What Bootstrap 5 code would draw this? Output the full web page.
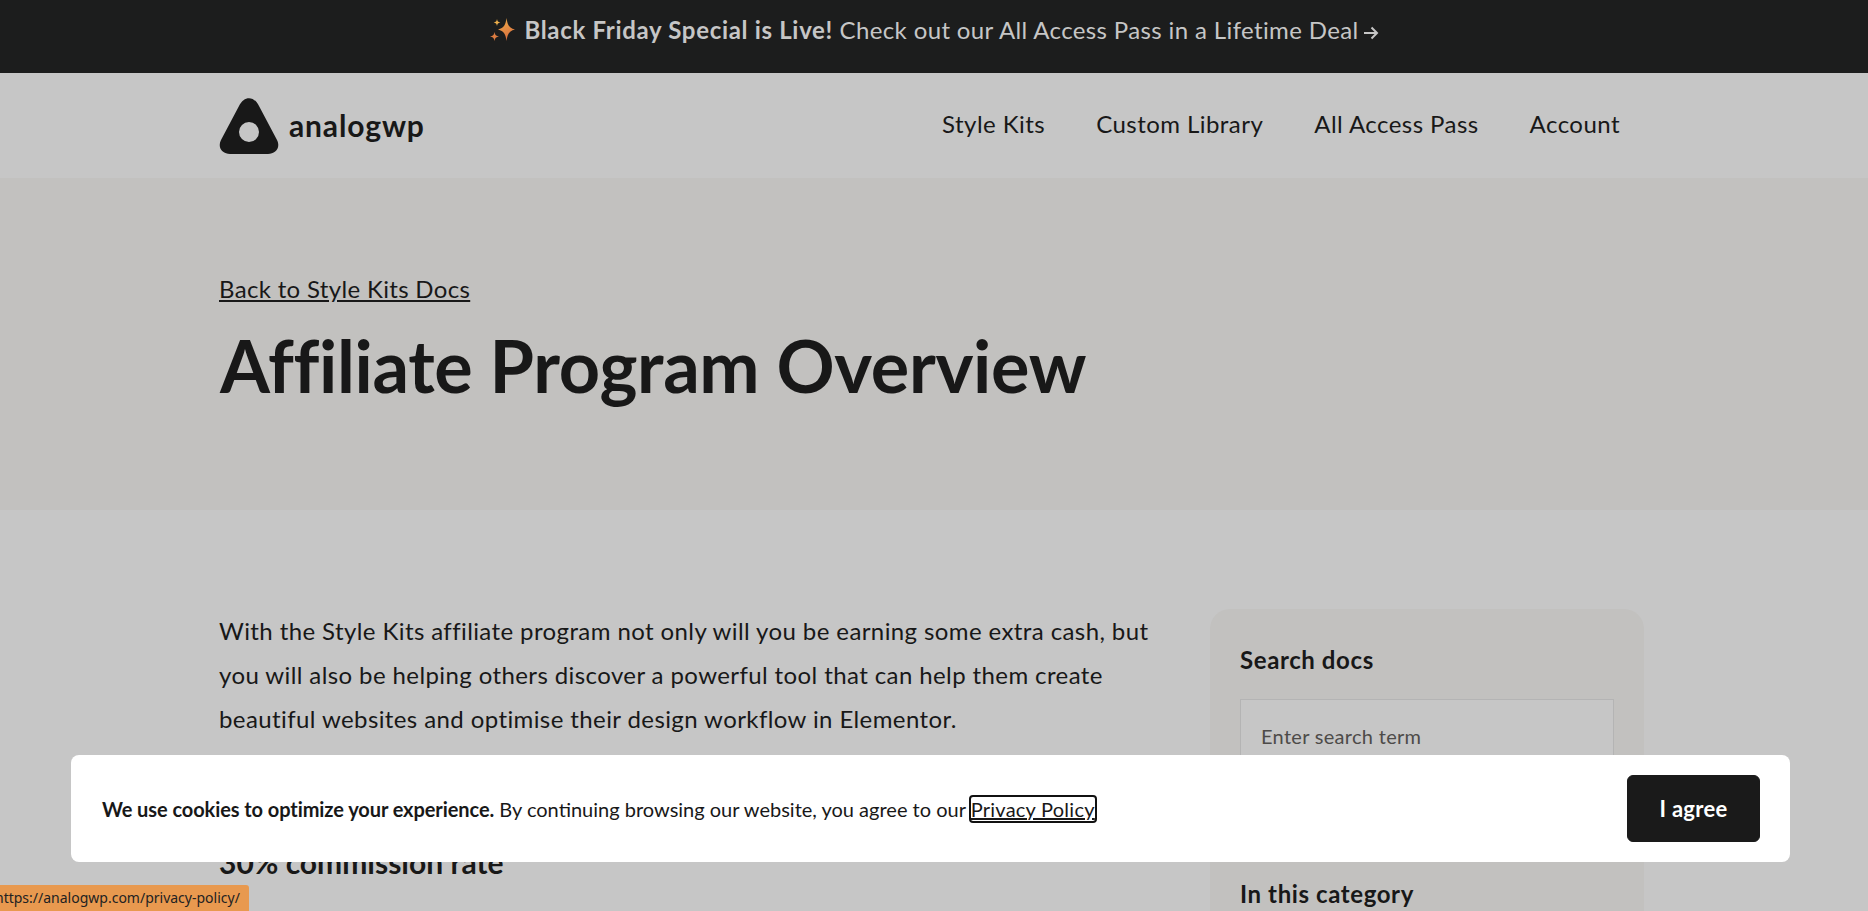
<!DOCTYPE html>
<html lang="en">
<head>
    <meta charset="UTF-8">
    <meta name="viewport" content="width=device-width, initial-scale=1.0">
    <title>Affiliate Program Overview</title>
    <link href="https://cdn.jsdelivr.net/npm/bootstrap@5.3.0/dist/css/bootstrap.min.css" rel="stylesheet">
    <style>
        html, body {
            height: 100%;
            overflow: hidden;
        }
        body {
            background-color: #c6c6c6;
            color: #181818;
            font-family: "Lato", "Liberation Sans", sans-serif;
        }
        .wrap {
            width: 1425px;
            margin-left: 219px;
        }
        .promo-bar {
            height: 73px;
            padding-bottom: 13px;
            background-color: #1c1d1d;
            color: #c6c6c6;
            font-size: 24px;
            gap: 7px;
        }
        .promo-bar a {
            color: #c6c6c6;
            text-decoration: none;
            letter-spacing: .37px;
        }
        .promo-bar strong {
            letter-spacing: .68px;
        }
        .promo-arrow {
            margin-left: 2px;
            vertical-align: -1px;
        }
        .site-nav {
            height: 105px;
        }
        .brand-name {
            font-size: 30px;
            font-weight: 700;
            color: #181818;
            text-decoration: none;
            gap: 10px;
            letter-spacing: .85px;
        }
        .menu {
            gap: 51px;
            padding-right: 24px;
            padding-bottom: 3px;
        }
        .menu a {
            font-size: 24px;
            color: #181818;
            text-decoration: none;
            letter-spacing: .45px;
        }
        .hero {
            height: 332px;
            background-color: #c2c1bf;
            padding-top: 93px;
        }
        .back-link {
            font-size: 24px;
            color: #181818;
            display: block;
            line-height: 36px;
            letter-spacing: .33px;
        }
        .hero h1 {
            font-size: 72px;
            font-weight: 700;
            line-height: 86px;
            margin-top: 15px;
            color: #181818;
            letter-spacing: -.34px;
            padding-left: 1px;
        }
        .body-area {
            padding-top: 99px;
            gap: 50px;
        }
        .main-col {
            width: 941px;
            flex: none;
        }
        .main-col p {
            font-size: 24px;
            line-height: 44px;
            margin-bottom: 103px;
            letter-spacing: .4px;
        }
        .main-col h2 {
            font-size: 30px;
            font-weight: 700;
        }
        .side-box {
            width: 434px;
            flex: none;
            background-color: #c2c1bf;
            border-radius: 20px;
            padding: 33px 30px;
        }
        .side-box h3 {
            font-size: 24px;
            font-weight: 700;
            line-height: 36px;
            margin-bottom: 21px;
            letter-spacing: .6px;
        }
        .search-field {
            background-color: #c6c6c6;
            border: 1px solid #b4b4b4;
            border-radius: 0;
            height: 74px;
            font-size: 20px;
            padding: 0 20px;
            margin-bottom: 103px;
            color: #4d4b49;
            letter-spacing: .3px;
        }
        .search-field::placeholder {
            color: #4d4b49;
        }
        .cookie-box {
            position: fixed;
            left: 71px;
            top: 755px;
            width: 1719px;
            height: 107px;
            background-color: #fff;
            border-radius: 8px;
            padding: 0 30px 0 31px;
            font-size: 20px;
            color: #181818;
            z-index: 10;
        }
        .cookie-box strong {
            letter-spacing: -.08px;
        }
        .cookie-box a {
            color: #181818;
            outline: 2px solid #111;
            border-radius: 2px;
            letter-spacing: .25px;
        }
        .agree-btn {
            width: 133px;
            height: 67px;
            background-color: #1a1a1a;
            border-color: #1a1a1a;
            color: #fff;
            font-size: 22px;
            font-weight: 700;
            border-radius: 6px;
            letter-spacing: .3px;
        }
        .status-tip {
            position: fixed;
            left: 0;
            bottom: 0;
            width: 249px;
            height: 26px;
            background-color: #e8994f;
            color: #222;
            font-family: "Noto Sans", "Liberation Sans", sans-serif;
            font-size: 14px;
            line-height: 26px;
            border-top-right-radius: 3px;
            white-space: nowrap;
            overflow: hidden;
            z-index: 11;
        }
        .status-tip span {
            margin-left: -5px;
        }
    </style>
</head>
<body>
    <div class="promo-bar d-flex align-items-center justify-content-center">
        <svg width="28" height="26" viewBox="0 0 28 26" aria-hidden="true">
            <defs>
                <linearGradient id="spark" x1="0" y1="0" x2="0.3" y2="1">
                    <stop offset="0" stop-color="#f0b04a"/>
                    <stop offset="1" stop-color="#d96f3e"/>
                </linearGradient>
            </defs>
            <path fill="url(#spark)" d="M17.500 1C18.500 8 20 11 26 12.500C20 14 18.500 17 17.500 24C16.500 17 15 14 9 12.500C15 11 16.500 8 17.500 1Z"/>
            <path fill="#eeb04c" d="M8 2C8.400 4.500 9 5 11.300 5.500C9 6 8.400 6.500 8 9C7.600 6.500 7 6 4.700 5.500C7 5 7.600 4.500 8 2Z"/>
            <path fill="#dd7d42" d="M5.500 15C6 18 7 19 10 19.500C7 20 6 21 5.500 24C5 21 4 20 1 19.500C4 19 5 18 5.500 15Z"/>
        </svg>
        <a href="#"><strong>Black Friday Special is Live!</strong> Check out our All Access Pass in a Lifetime Deal<svg class="promo-arrow" width="18" height="14" viewBox="0 0 18 14" aria-hidden="true"><path fill="none" stroke="#c6c6c6" stroke-width="2" d="M3 7H16M10.500 1.500L16 7L10.500 12.500"/></svg></a>
    </div>

    <nav class="site-nav wrap d-flex align-items-center justify-content-between">
        <a class="brand-name d-flex align-items-center" href="#">
            <svg width="60" height="56" viewBox="0 0 60 56" aria-hidden="true">
                <path fill="#181818" fill-rule="evenodd" d="M20 8C25 -2.500 35 -2.500 40 8L58 42C62 50 56 56 49 56H11C4 56 -2 50 2 42ZM30 24A10 10 0 1 0 30 44A10 10 0 1 0 30 24Z"/>
            </svg>
            analogwp
        </a>
        <div class="menu d-flex">
            <a href="#">Style Kits</a>
            <a href="#">Custom Library</a>
            <a href="#">All Access Pass</a>
            <a href="#">Account</a>
        </div>
    </nav>

    <header class="hero">
        <div class="wrap">
            <a class="back-link" href="#">Back to Style Kits Docs</a>
            <h1>Affiliate Program Overview</h1>
        </div>
    </header>

    <div class="body-area wrap d-flex align-items-start">
        <div class="main-col">
            <p>With the Style Kits affiliate program not only will you be earning some extra cash, but you will also be helping others discover a powerful tool that can help them create beautiful websites and optimise their design workflow in Elementor.</p>
            <h2>30% commission rate</h2>
        </div>
        <aside class="side-box">
            <h3>Search docs</h3>
            <input class="form-control search-field" type="text" placeholder="Enter search term">
            <h3>In this category</h3>
        </aside>
    </div>

    <div class="cookie-box d-flex align-items-center justify-content-between">
        <div><strong>We use cookies to optimize your experience.</strong> By continuing browsing our website, you agree to our <a href="#">Privacy Policy</a></div>
        <button class="btn agree-btn" type="button">I agree</button>
    </div>

    <div class="status-tip"><span>https://analogwp.com/privacy-policy/</span></div>

    <script src="https://cdn.jsdelivr.net/npm/bootstrap@5.3.0/dist/js/bootstrap.bundle.min.js"></script>
</body>
</html>
